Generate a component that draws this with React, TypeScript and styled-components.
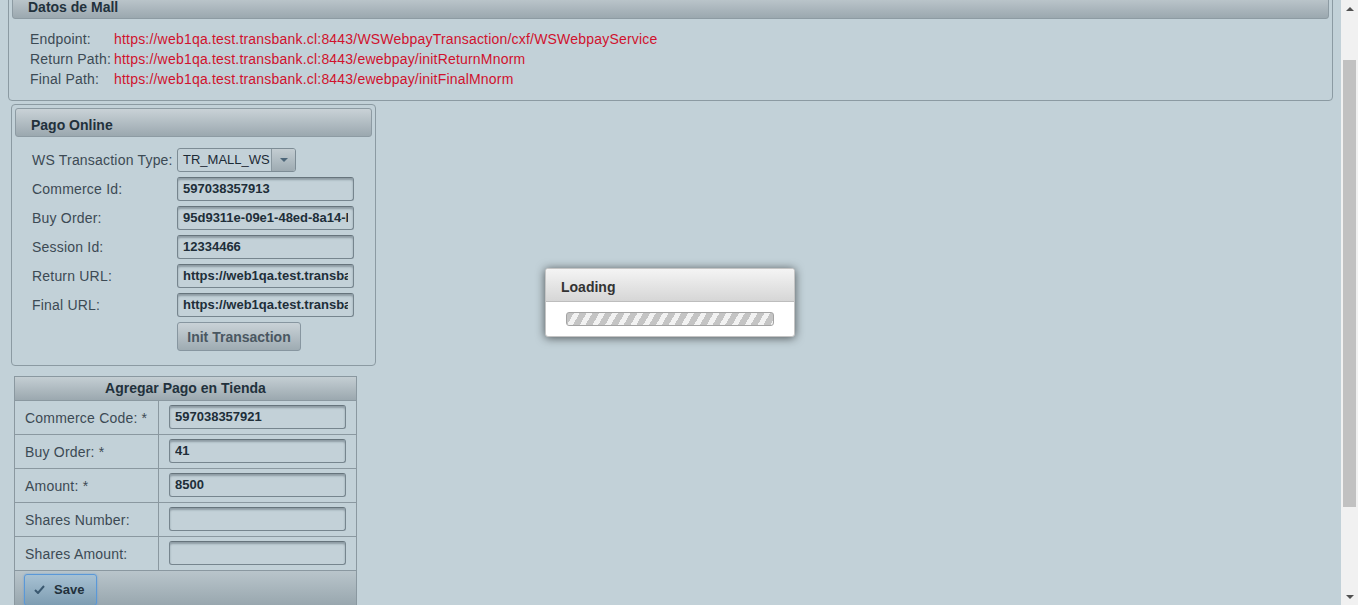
import React from "react";
import styled, { createGlobalStyle } from "styled-components";

const Global = createGlobalStyle`
  html, body { margin: 0; padding: 0; }
  body {
    font-family: "Liberation Sans", Arial, sans-serif;
    font-size: 14px;
    overflow: hidden;
  }
  * { box-sizing: border-box; }
`;

const Viewport = styled.div`
  position: relative;
  display: flex;
  width: 1358px;
  height: 605px;
  overflow: hidden;
  background: #c2d1d8;
`;

const Page = styled.main`
  flex: 1;
  min-width: 0;
  display: flex;
  flex-direction: column;
  align-items: flex-start;
  padding-left: 8px;
`;

const Panel = styled.section<{ $width: number; $top: number; $left: number }>`
  width: ${(p) => p.$width}px;
  margin-top: ${(p) => p.$top}px;
  margin-left: ${(p) => p.$left}px;
  border: 1px solid #8b9aa2;
  border-radius: 4px;
  padding: 3px;
  flex-shrink: 0;
`;

const PanelHeader = styled.h2`
  margin: 0;
  height: 29px;
  padding: 8px 15px 0 15px;
  line-height: 16px;
  font-size: 14px;
  font-weight: bold;
  color: #22313c;
  border: 1px solid #8d9ba3;
  border-radius: 3px;
  background: linear-gradient(#c9d2d7, #9ba8af);
`;

const InfoGrid = styled.div`
  display: grid;
  grid-template-columns: 84px auto;
  padding: 10px 0 8px 18px;
  line-height: 20px;
  letter-spacing: 0.2px;
`;

const InfoLabel = styled.span`
  color: #3c4a54;
`;

const InfoValue = styled.span`
  color: #d0122e;
`;

const FormGrid = styled.div`
  display: grid;
  grid-template-columns: 145px auto;
  row-gap: 5px;
  align-items: center;
  padding: 11px 0 11px 17px;
`;

const FormLabel = styled.label`
  color: #3c4a54;
  font-size: 14px;
  letter-spacing: 0.2px;
`;

const TextInput = styled.input<{ $width: number }>`
  width: ${(p) => p.$width}px;
  height: 24px;
  padding: 0 5px 1px;
  border: 1px solid #76858e;
  border-top-color: #66747c;
  border-radius: 3px;
  background: #c3d1d8;
  box-shadow: inset 0 2px 2px rgba(40, 55, 65, 0.35);
  font-family: "Liberation Sans", Arial, sans-serif;
  font-size: 13px;
  font-weight: bold;
  color: #202e39;
  outline: none;
`;

const SelectBox = styled.div`
  display: flex;
  width: 119px;
  height: 24px;
  border: 1px solid #7d8c95;
  border-radius: 3px;
  overflow: hidden;
  background: #c3d1d8;
`;

const SelectText = styled.span`
  flex: 1;
  padding-left: 5px;
  line-height: 22px;
  color: #1c2a35;
  font-size: 13px;
  white-space: nowrap;
  overflow: hidden;
`;

const SelectTrigger = styled.span`
  width: 24px;
  display: flex;
  align-items: center;
  justify-content: center;
  border-left: 1px solid #8a98a0;
  background: linear-gradient(#c3cdd2, #9eabb2);
`;

const Caret = styled.span<{ $color: string; $up?: boolean }>`
  width: 0;
  height: 0;
  border-left: 4px solid transparent;
  border-right: 4px solid transparent;
  ${(p) =>
    p.$up
      ? `border-bottom: 4px solid ${p.$color};`
      : `border-top: 4px solid ${p.$color};`}
`;

const GrayButton = styled.button`
  width: 124px;
  height: 29px;
  padding: 0;
  border: 1px solid #8796a0;
  border-radius: 3px;
  background: linear-gradient(#c9d2d7, #9eabb2);
  font-family: "Liberation Sans", Arial, sans-serif;
  font-size: 14px;
  font-weight: bold;
  color: #4a5761;
`;

const Table = styled.div`
  width: 343px;
  margin: 10px 0 0 6px;
  border: 1px solid #8a98a0;
  display: grid;
  grid-template-columns: 144px 1fr;
  flex-shrink: 0;
`;

const TableHead = styled.div`
  grid-column: 1 / -1;
  height: 23px;
  line-height: 22px;
  text-align: center;
  font-weight: bold;
  color: #22313c;
  background: linear-gradient(#c4ced3, #9ba8af);
`;

const LabelCell = styled.div`
  height: 34px;
  border-top: 1px solid #8a98a0;
  border-right: 1px solid #8a98a0;
  padding-left: 10px;
  display: flex;
  align-items: center;
  color: #3c4a54;
  letter-spacing: 0.2px;
`;

const FieldCell = styled.div`
  height: 34px;
  border-top: 1px solid #8a98a0;
  padding: 0 0 1px 10px;
  display: flex;
  align-items: center;
`;

const TableFoot = styled.div`
  grid-column: 1 / -1;
  height: 45px;
  border-top: 1px solid #8a98a0;
  padding: 3px 0 0 9px;
  background: linear-gradient(#b9c5cb, #8f9ea6);
`;

const SaveButton = styled.button`
  display: flex;
  align-items: center;
  gap: 9px;
  width: 73px;
  height: 32px;
  padding: 0 0 2px 9px;
  border: 1px solid #5a98d8;
  border-radius: 3px;
  background: linear-gradient(#a7c1d3, #7e9db2);
  box-shadow: 0 0 2px rgba(80, 150, 220, 0.7);
  font-family: "Liberation Sans", Arial, sans-serif;
  font-size: 13px;
  font-weight: bold;
  color: #22313c;
`;

const Dialog = styled.div`
  position: absolute;
  left: 545px;
  top: 268px;
  width: 250px;
  border: 1px solid #c4c4c4;
  border-radius: 3px;
  background: #fff;
  box-shadow: 0 1px 10px rgba(0, 0, 0, 0.6);
  overflow: hidden;
`;

const DialogHeader = styled.div`
  height: 33px;
  padding: 10px 15px 0;
  line-height: 16px;
  font-size: 14px;
  font-weight: bold;
  color: #333;
  border-bottom: 1px solid #bdbdbd;
  background: linear-gradient(#f4f4f4, #d6d6d6);
`;

const DialogBody = styled.div`
  padding: 10px 20px 10px;
`;

const Progress = styled.div`
  height: 14px;
  border: 1px solid #a4a4a4;
  border-radius: 3px;
  background: repeating-linear-gradient(
    120deg,
    #c4c4c4 0 6px,
    #f2f2f2 6px 11px
  );
`;

const Scrollbar = styled.div`
  width: 17px;
  display: flex;
  flex-direction: column;
  background: #f1f1f1;
`;

const ScrollArrow = styled.div`
  height: 17px;
  display: flex;
  align-items: center;
  justify-content: center;
`;

const ScrollTrack = styled.div`
  flex: 1;
  padding: 43px 2px 0;
`;

const ScrollThumb = styled.div`
  height: 447px;
  background: #c1c1c1;
`;

const CheckIcon = () => (
  <svg width="11" height="9" viewBox="0 0 11 9">
    <path d="M1 5 L4 8 L10 1" fill="none" stroke="#3a5870" strokeWidth="2" />
  </svg>
);

export default function App() {
  return (
    <>
      <Global />
      <Viewport>
        <Page>
          <Panel $width={1325} $top={-14} $left={0}>
            <PanelHeader>Datos de Mall</PanelHeader>
            <InfoGrid>
              <InfoLabel>Endpoint:</InfoLabel>
              <InfoValue>https://web1qa.test.transbank.cl:8443/WSWebpayTransaction/cxf/WSWebpayService</InfoValue>
              <InfoLabel>Return Path:</InfoLabel>
              <InfoValue>https://web1qa.test.transbank.cl:8443/ewebpay/initReturnMnorm</InfoValue>
              <InfoLabel>Final Path:</InfoLabel>
              <InfoValue>https://web1qa.test.transbank.cl:8443/ewebpay/initFinalMnorm</InfoValue>
            </InfoGrid>
          </Panel>

          <Panel $width={365} $top={3} $left={3}>
            <PanelHeader>Pago Online</PanelHeader>
            <FormGrid>
              <FormLabel>WS Transaction Type:</FormLabel>
              <SelectBox>
                <SelectText>TR_MALL_WS</SelectText>
                <SelectTrigger>
                  <Caret $color="#4d6679" />
                </SelectTrigger>
              </SelectBox>
              <FormLabel>Commerce Id:</FormLabel>
              <TextInput $width={177} readOnly defaultValue="597038357913" />
              <FormLabel>Buy Order:</FormLabel>
              <TextInput $width={177} readOnly defaultValue="95d9311e-09e1-48ed-8a14-b7c3a1e0f5d2" />
              <FormLabel>Session Id:</FormLabel>
              <TextInput $width={177} readOnly defaultValue="12334466" />
              <FormLabel>Return URL:</FormLabel>
              <TextInput $width={177} readOnly defaultValue="https://web1qa.test.transbank.cl:8443/ewebpay/initReturnMnorm" />
              <FormLabel>Final URL:</FormLabel>
              <TextInput $width={177} readOnly defaultValue="https://web1qa.test.transbank.cl:8443/ewebpay/initFinalMnorm" />
              <span />
              <GrayButton>Init Transaction</GrayButton>
            </FormGrid>
          </Panel>

          <Table>
            <TableHead>Agregar Pago en Tienda</TableHead>
            <LabelCell>Commerce Code: *</LabelCell>
            <FieldCell>
              <TextInput $width={177} readOnly defaultValue="597038357921" />
            </FieldCell>
            <LabelCell>Buy Order: *</LabelCell>
            <FieldCell>
              <TextInput $width={177} readOnly defaultValue="41" />
            </FieldCell>
            <LabelCell>Amount: *</LabelCell>
            <FieldCell>
              <TextInput $width={177} readOnly defaultValue="8500" />
            </FieldCell>
            <LabelCell>Shares Number:</LabelCell>
            <FieldCell>
              <TextInput $width={177} readOnly defaultValue="" />
            </FieldCell>
            <LabelCell>Shares Amount:</LabelCell>
            <FieldCell>
              <TextInput $width={177} readOnly defaultValue="" />
            </FieldCell>
            <TableFoot>
              <SaveButton>
                <CheckIcon />
                Save
              </SaveButton>
            </TableFoot>
          </Table>
        </Page>

        <Scrollbar>
          <ScrollArrow>
            <Caret $color="#505050" $up />
          </ScrollArrow>
          <ScrollTrack>
            <ScrollThumb />
          </ScrollTrack>
          <ScrollArrow>
            <Caret $color="#505050" />
          </ScrollArrow>
        </Scrollbar>

        <Dialog>
          <DialogHeader>Loading</DialogHeader>
          <DialogBody>
            <Progress />
          </DialogBody>
        </Dialog>
      </Viewport>
    </>
  );
}
